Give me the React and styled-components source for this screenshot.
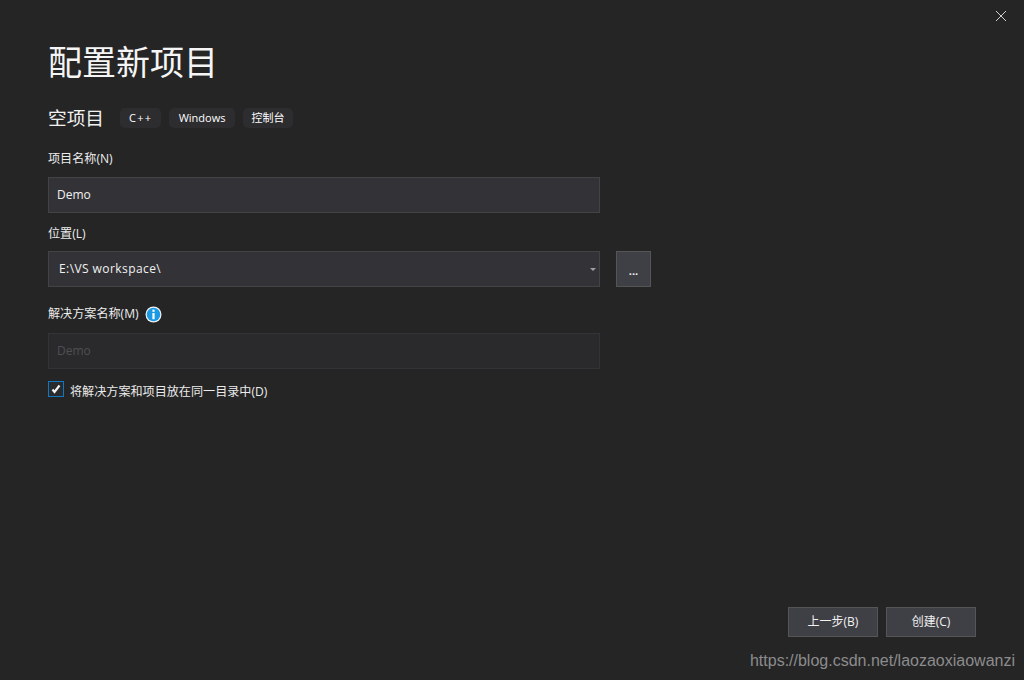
import React from "react";
import styled, { createGlobalStyle } from "styled-components";

const Global = createGlobalStyle`
  html, body { margin: 0; padding: 0; background: #252526; }
  * { box-sizing: border-box; }
`;
const FONT = `"Open Sans", "Noto Sans CJK SC", sans-serif`;
const CJK = `"Noto Sans CJK SC", "Open Sans", sans-serif`;

const Page = styled.div`
  position: relative;
  width: 1024px;
  height: 680px;
  background: #252526;
  color: #f1f1f1;
  font-family: ${FONT};
  display: flex;
  flex-direction: column;
  overflow: hidden;
  padding: 0 48px;
`;
const Close = styled.button`
  position: absolute;
  top: 10px;
  right: 17px;
  width: 12px;
  height: 12px;
  padding: 0;
  border: 0;
  background: none;
  color: #d0d0d0;
  display: flex;
`;
const Title = styled.h1`
  margin: 38px 0 0;
  font: 400 34px/46px ${CJK};
  color: #f5f5f5;
`;
const SubRow = styled.div`
  display: flex;
  align-items: center;
  margin-top: 20px;
  height: 28px;
`;
const SubTitle = styled.h2`
  margin: -2px 16px 0 0;
  font: 400 18.7px/28px ${CJK};
  color: #f1f1f1;
`;
const Chip = styled.span`
  height: 20px;
  padding: 0 ${(p) => p.$pad || 9}px;
  margin-right: 8px;
  border-radius: 5px;
  background: #2d2d30;
  color: #ffffff;
  font: 400 11px/20px ${FONT};
  letter-spacing: ${(p) => p.$spacing || 0}px;
  white-space: nowrap;
`;
const Label = styled.label`
  display: flex;
  align-items: center;
  height: 18px;
  margin-top: ${(p) => p.$top}px;
  margin-bottom: ${(p) => p.$bottom}px;
  font: 400 12.1px/18px ${FONT};
  color: #ececec;
`;
const Field = styled.div`
  width: 552px;
  height: 36px;
  flex: none;
  display: flex;
  align-items: center;
  justify-content: space-between;
  padding: ${(p) => (p.$combo ? "0 3px 0 10px" : "0 8px")};
  background: ${(p) => (p.$disabled ? "#2a2a2c" : "#333337")};
  border: 1px solid ${(p) => (p.$disabled ? "#333337" : "#434346")};
  color: ${(p) => (p.$disabled ? "#4f4f52" : "#f1f1f1")};
  font: 400 12px/18px ${FONT};
  letter-spacing: ${(p) => (p.$combo ? "0.42px" : "0")};
`;
const Caret = styled.span`
  width: 0;
  height: 0;
  border-left: 3.5px solid transparent;
  border-right: 3.5px solid transparent;
  border-top: 3.5px solid #a0a0a0;
`;
const LocationRow = styled.div`
  display: flex;
  gap: 16px;
`;
const Browse = styled.button`
  width: 35px;
  height: 36px;
  padding: 4px 0 0;
  background: #3f3f46;
  border: 1px solid #555558;
  color: #f1f1f1;
  font: 700 11px/18px ${FONT};
`;
const Info = styled.svg`
  width: 17px;
  height: 17px;
  margin-left: 6px;
`;
const CheckRow = styled.div`
  display: flex;
  align-items: flex-start;
  gap: 6px;
  margin-top: 12px;
  height: 16px;
  font: 400 12.1px/16px ${FONT};
  color: #ececec;
`;
const CheckText = styled.span`
  margin-top: 3px;
`;
const Box = styled.span`
  width: 16px;
  height: 16px;
  border: 1px solid #0e78c4;
  background: #2a2a2c;
  display: flex;
  align-items: center;
  justify-content: center;
`;
const Footer = styled.div`
  margin-top: auto;
  margin-bottom: 43px;
  display: flex;
  justify-content: flex-end;
  gap: 8px;
`;
const ActionButton = styled.button`
  width: 90px;
  height: 30px;
  padding: 0;
  background: #3f3f46;
  border: 1px solid #555558;
  color: #f1f1f1;
  font: 400 12px/18px ${FONT};
`;
const Watermark = styled.div`
  position: absolute;
  right: 9px;
  top: 651px;
  font: 400 16px/20px "Liberation Sans", sans-serif;
  color: #8c8c8c;
  white-space: nowrap;
`;

export default function App() {
  return (
    <Page>
      <Global />
      <Close aria-label="关闭">
        <svg width="12" height="12" viewBox="0 0 12 12" fill="none" stroke="currentColor" strokeWidth="1">
          <path d="M1 1l10 10M11 1L1 11" />
        </svg>
      </Close>
      <Title>配置新项目</Title>
      <SubRow>
        <SubTitle>空项目</SubTitle>
        <Chip $spacing={1.2}>C++</Chip>
        <Chip $pad={9.5}>Windows</Chip>
        <Chip $pad={8.5}>控制台</Chip>
      </SubRow>
      <Label $top={18} $bottom={9}>项目名称(N)</Label>
      <Field>Demo</Field>
      <Label $top={12} $bottom={8}>位置(L)</Label>
      <LocationRow>
        <Field $combo>
          E:\VS workspace\
          <Caret />
        </Field>
        <Browse>...</Browse>
      </LocationRow>
      <Label $top={18} $bottom={10}>
        解决方案名称(M)
        <Info viewBox="0 0 17 17">
          <circle cx="8.5" cy="8.5" r="8" fill="#f4f4f4" />
          <circle cx="8.5" cy="8.5" r="6.8" fill="#1b9ae4" />
          <rect x="7.4" y="3.6" width="2.2" height="2.2" fill="#fff" />
          <rect x="7.4" y="7" width="2.2" height="6.2" fill="#fff" />
        </Info>
      </Label>
      <Field $disabled>Demo</Field>
      <CheckRow>
        <Box>
          <svg width="12" height="12" viewBox="0 0 12 12" fill="none" stroke="#f1f1f1" strokeWidth="2.2">
            <path d="M2.5 6.5l2 2.4L9.5 2.5" />
          </svg>
        </Box>
        <CheckText>将解决方案和项目放在同一目录中(D)</CheckText>
      </CheckRow>
      <Footer>
        <ActionButton>上一步(B)</ActionButton>
        <ActionButton>创建(C)</ActionButton>
      </Footer>
      <Watermark>https://blog.csdn.net/laozaoxiaowanzi</Watermark>
    </Page>
  );
}
